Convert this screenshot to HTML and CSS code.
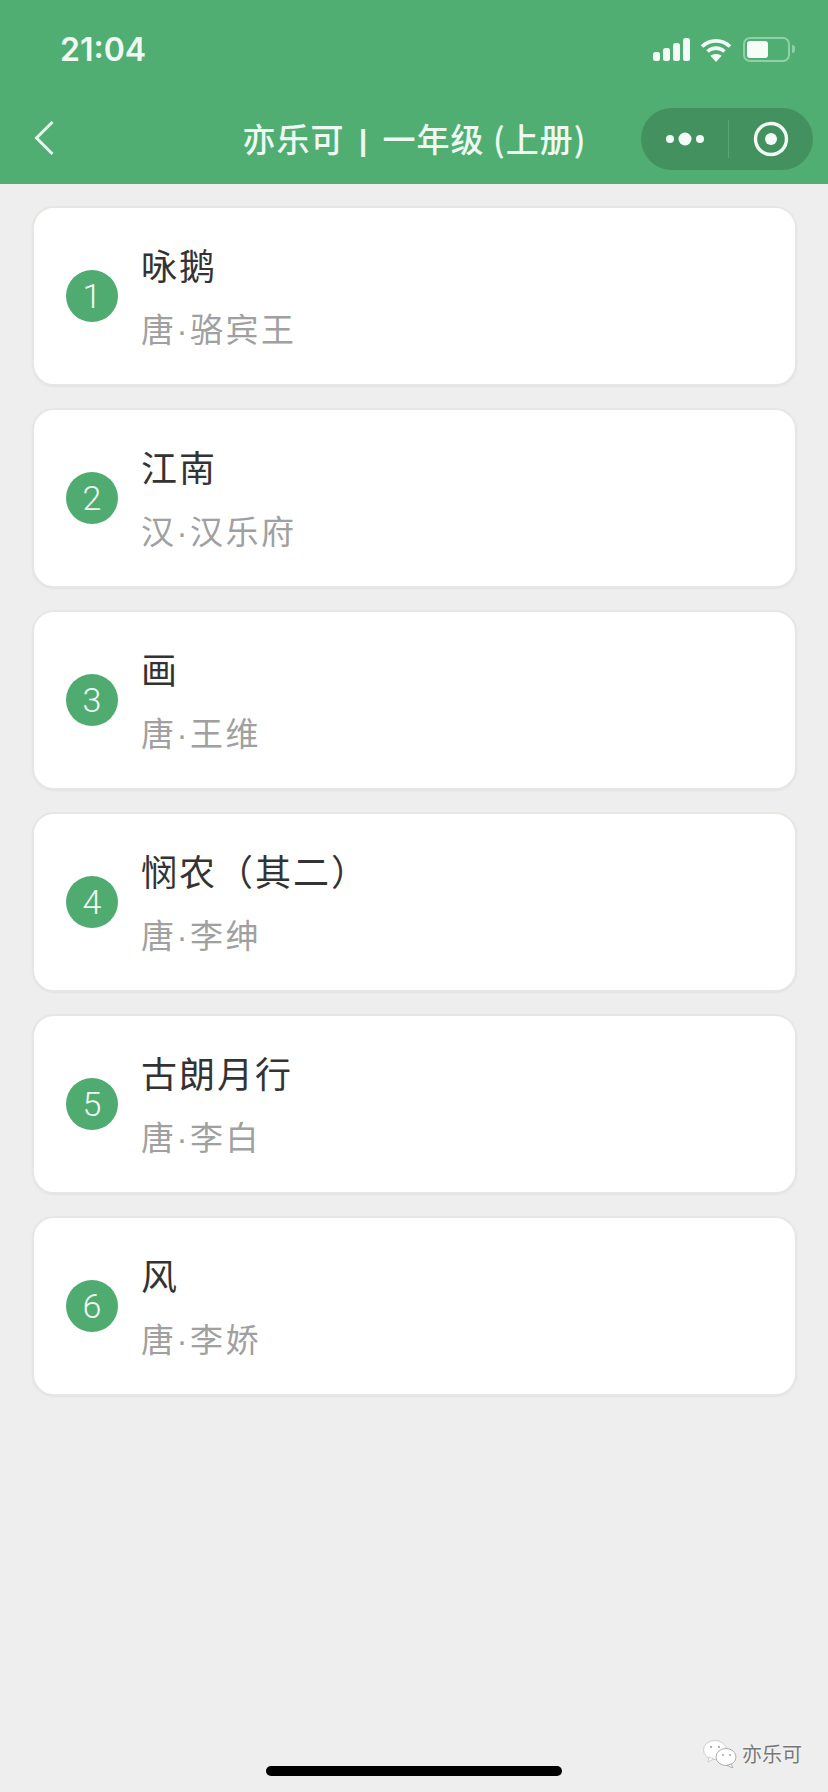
FILE: index.html
```html
<!DOCTYPE html>
<html lang="zh-CN">
<head>
  <meta charset="UTF-8" />
  <meta name="viewport" content="width=device-width, initial-scale=1" />
  <title>亦乐可 | 一年级 (上册)</title>
  <link rel="stylesheet" href="styles.css">
</head>
<body>

<header class="topbar">
  <div class="status">
    <span class="time">21:04</span>
    <div class="status-icons">
      <svg class="signal" width="37" height="23" viewBox="0 0 37 23" fill="#f2fbf5">
        <rect x="0" y="14" width="7" height="9" rx="2.5"/>
        <rect x="10" y="10" width="7" height="13" rx="2.5"/>
        <rect x="20" y="5" width="7" height="18" rx="2.5"/>
        <rect x="30" y="0" width="7" height="23" rx="2.5"/>
      </svg>
      <svg class="wifi" width="32" height="25" viewBox="0 0 32 25" fill="none" stroke="#f2fbf5" stroke-width="3.6">
        <path d="M2 9.5C9.8 2 22.2 2 30 9.5"/>
        <path d="M7.5 14.5C12.4 10 19.6 10 24.5 14.5"/>
        <path d="M16 25l-5.6-6.2c3.2-2.5 8-2.5 11.2 0z" fill="#f2fbf5" stroke="none"/>
      </svg>
      <div class="battery">
        <div class="battery-body"><div class="battery-level"></div></div>
        <div class="battery-nub"></div>
      </div>
    </div>
  </div>
  <nav class="navbar">
    <svg class="back" width="20" height="36" viewBox="0 0 20 36" fill="none" stroke="#e9f7ee" stroke-width="3">
      <path d="M18.5 2L2.5 18l16 16"/>
    </svg>
    <h1 class="nav-title">亦乐可 <span class="nav-sep">|</span> 一年级 (上册)</h1>
    <div class="capsule">
      <div class="capsule-side capsule-more">
        <svg width="38" height="14" viewBox="0 0 38 14" fill="#f2fbf5">
          <circle cx="4" cy="7" r="4"/>
          <circle cx="19" cy="7" r="6.5"/>
          <circle cx="34" cy="7" r="4"/>
        </svg>
      </div>
      <div class="capsule-line"></div>
      <div class="capsule-side">
        <svg width="36" height="36" viewBox="0 0 36 36" fill="none" stroke="#f2fbf5" stroke-width="3.4">
          <circle cx="18" cy="18" r="15.5"/>
          <circle cx="18" cy="18" r="6" fill="#f2fbf5" stroke="none"/>
        </svg>
      </div>
    </div>
  </nav>
</header>

<main class="poem-list">
  <div class="poem-card">
    <div class="poem-num">1</div>
    <div class="poem-text">
      <div class="poem-name">咏鹅</div>
      <div class="poem-author">唐·骆宾王</div>
    </div>
  </div>
  <div class="poem-card">
    <div class="poem-num">2</div>
    <div class="poem-text">
      <div class="poem-name">江南</div>
      <div class="poem-author">汉·汉乐府</div>
    </div>
  </div>
  <div class="poem-card">
    <div class="poem-num">3</div>
    <div class="poem-text">
      <div class="poem-name">画</div>
      <div class="poem-author">唐·王维</div>
    </div>
  </div>
  <div class="poem-card">
    <div class="poem-num">4</div>
    <div class="poem-text">
      <div class="poem-name">悯农（其二）</div>
      <div class="poem-author">唐·李绅</div>
    </div>
  </div>
  <div class="poem-card">
    <div class="poem-num">5</div>
    <div class="poem-text">
      <div class="poem-name">古朗月行</div>
      <div class="poem-author">唐·李白</div>
    </div>
  </div>
  <div class="poem-card">
    <div class="poem-num">6</div>
    <div class="poem-text">
      <div class="poem-name">风</div>
      <div class="poem-author">唐·李娇</div>
    </div>
  </div>
</main>

<div class="watermark">
  <svg width="34" height="28" viewBox="0 0 34 28">
    <ellipse cx="12" cy="10" rx="11.5" ry="9.5" fill="#fff" stroke="#c4c4c4" stroke-width="0.8"/>
    <path d="M6 17l-1 5 6-3z" fill="#fff" stroke="#c4c4c4" stroke-width="0.8"/>
    <ellipse cx="23" cy="17" rx="10" ry="8.5" fill="#fff" stroke="#9a9a9a" stroke-width="0.8"/>
    <path d="M28 24l2 4-6-2.5z" fill="#fff" stroke="#9a9a9a" stroke-width="0.8"/>
    <circle cx="8" cy="7" r="1" fill="#999"/>
    <circle cx="16" cy="7" r="1" fill="#999"/>
    <circle cx="20" cy="15" r="0.9" fill="#999"/>
    <circle cx="27" cy="15" r="0.9" fill="#999"/>
  </svg>
  <span class="watermark-text">亦乐可</span>
</div>

<div class="home-bar"></div>

</body>
</html>
```

FILE: styles.css
```css
body {
  font-family: "Noto Sans CJK SC", "Noto Sans", sans-serif;
  background: #eeeeee;
  color: #333;
  margin: 0;
  padding: 0;
  min-height: 100vh;
  overflow: hidden;
}

/* Шапка */
.topbar {
  background: #50ae72;
  height: 184px;
  display: flex;
  flex-direction: column;
}
.status {
  height: 98px;
  padding: 0 33px 0 60px;
  display: flex;
  align-items: center;
  justify-content: space-between;
}
.time {
  font-family: Inter, sans-serif;
  font-size: 32px;
  font-weight: 600;
  color: #f0faf3;
}
.status-icons {
  display: flex;
  align-items: center;
  gap: 10px;
}
.battery {
  display: flex;
  align-items: center;
  gap: 2px;
  margin-left: 1px;
}
.battery-body {
  width: 47px;
  height: 25px;
  box-sizing: border-box;
  border: 2px solid #8fd0a6;
  border-radius: 7px;
  padding: 2px;
}
.battery-level {
  width: 21px;
  height: 100%;
  background: #f6fcf8;
  border-radius: 3px;
}
.battery-nub {
  width: 3px;
  height: 8px;
  background: #8fd0a6;
  border-radius: 0 3px 3px 0;
}
.navbar {
  height: 86px;
  display: grid;
  grid-template-columns: 1fr auto 1fr;
  align-items: center;
  padding: 0 15px 0 34px;
}
.back {
  margin-top: -7px;
}
.nav-title {
  margin: -3px 0 0;
  font-size: 33px;
  font-weight: 500;
  line-height: 44px;
  letter-spacing: 1px;
  color: #eef9f2;
  white-space: nowrap;
  transform: translateX(-9px);
}
.nav-sep {
  font-family: "Liberation Sans", sans-serif;
  font-size: 29px;
  font-weight: 700;
  margin: 0 6px;
  vertical-align: 1px;
}
.capsule {
  justify-self: end;
  width: 172px;
  height: 62px;
  margin-top: -4px;
  background: #43915f;
  border-radius: 31px;
  display: flex;
  align-items: center;
}
.capsule-side {
  flex: 1;
  display: flex;
  align-items: center;
  justify-content: center;
}
.capsule-more {
  padding-left: 2px;
}
.capsule-line {
  width: 1px;
  height: 38px;
  background: #5aa677;
}

/* Карточки */
.poem-list {
  padding: 22px 31px 0 32px;
  display: flex;
  flex-direction: column;
  gap: 22px;
}
.poem-card {
  height: 180px;
  box-sizing: border-box;
  background: #fff;
  border: 2px solid #e6e6e2;
  border-radius: 22px;
  box-shadow: 0 1px 2px #0000000d;
  padding: 0 32px;
  display: flex;
  align-items: center;
  gap: 23px;
}
.poem-num {
  width: 52px;
  height: 52px;
  flex-shrink: 0;
  border-radius: 50%;
  background: #4fab70;
  color: #f0faf3;
  font-family: Roboto, sans-serif;
  font-size: 34px;
  font-weight: 300;
  line-height: 52px;
  text-align: center;
}
.poem-text {
  display: flex;
  flex-direction: column;
  gap: 17px;
}
.poem-name {
  font-size: 36px;
  line-height: 52px;
  letter-spacing: 2px;
  color: #333;
}
.poem-author {
  font-family: "Liberation Sans", "Noto Sans CJK SC", sans-serif;
  font-size: 33px;
  line-height: 48px;
  letter-spacing: 2.5px;
  color: #a0a0a0;
}

/* Поверх контента */
.watermark {
  position: absolute;
  right: 26px;
  bottom: 24px;
  display: flex;
  align-items: center;
  gap: 5px;
}
.watermark-text {
  font-size: 20px;
  color: #777;
  text-shadow: 0 0 2px #fff;
}
.home-bar {
  position: absolute;
  left: 266px;
  bottom: 16px;
  width: 296px;
  height: 10px;
  background: #000;
  border-radius: 5px;
}
```
